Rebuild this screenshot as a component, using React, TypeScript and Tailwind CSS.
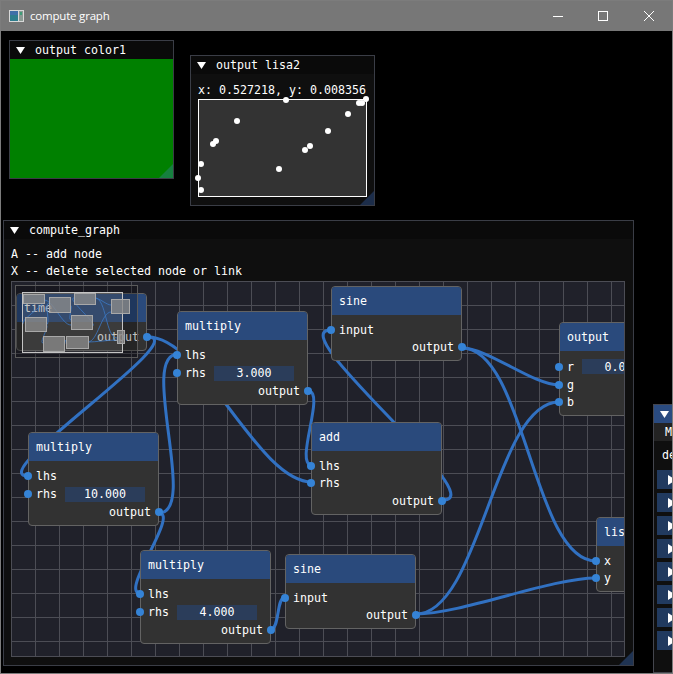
import React from "react";

type Pt = [number, number];

const mono = "font-['DejaVu_Sans_Mono',monospace] text-[11.63px] leading-none text-white whitespace-pre pt-[2px]";

// link curve the way the node editor draws them
const linkPath = (a: Pt, b: Pt) => {
  const off = 0.25 * Math.hypot(b[0] - a[0], b[1] - a[1]);
  return `M${a[0]} ${a[1]}C${a[0] + off} ${a[1]} ${b[0] - off} ${b[1]} ${b[0]} ${b[1]}`;
};

const links: [Pt, Pt][] = [
  [[148, 337], [312, 482]],
  [[148, 337], [28, 476]],
  [[159, 513], [178, 354]],
  [[159, 513], [140, 593]],
  [[308, 391], [312, 465]],
  [[443, 500], [331, 330]],
  [[462, 348], [559, 385]],
  [[462, 348], [596, 561]],
  [[416, 614], [559, 402]],
  [[416, 614], [596, 578]],
  [[271, 629], [285, 597]],
];

const miniNodes = [
  [23, 294, 21, 9],
  [49, 297, 21, 15],
  [74, 293, 21, 11],
  [111, 299, 18, 14],
  [25, 317, 21, 14],
  [71, 315, 21, 14],
  [43, 336, 21, 15],
  [66, 336, 22, 12],
  [117, 330, 7, 13],
];

const miniLinks: [Pt, Pt][] = [
  [[44, 300], [24, 323]],
  [[44, 300], [71, 325]],
  [[46, 325], [49, 303]],
  [[46, 325], [43, 343]],
  [[70, 305], [71, 320]],
  [[92, 326], [74, 298]],
  [[95, 298], [111, 305]],
  [[95, 298], [117, 338]],
  [[88, 342], [111, 312]],
  [[88, 342], [117, 340]],
  [[64, 345], [66, 340]],
];

const plotPoints: Pt[] = [
  [286, 100], [366, 99], [362, 103], [359, 103], [348, 114], [328, 131], [310, 146], [305, 150],
  [279, 169], [237, 121], [216, 141], [213, 144], [201, 164], [198, 178], [201, 190],
];

const TriDown = () => (
  <svg viewBox="0 0 9 7" className="w-[9px] h-[7px] shrink-0">
    <polygon points="0,0 9,0 4.5,7" fill="#fff" />
  </svg>
);

const WinTitle = ({ text }: { text: string }) => (
  <div className="h-[18px] bg-[#0a0a0a] flex items-center pl-[6px] gap-[10px]">
    <TriDown />
    <span className={mono}>{text}</span>
  </div>
);

const Corner = ({ className }: { className: string }) => (
  <div className={`absolute right-0 bottom-0 w-[14px] h-[14px] [clip-path:polygon(100%_0,100%_100%,0_100%)] ${className}`} />
);

interface Row {
  label: string;
  out?: boolean;
  value?: string;
}

const Node = ({ title, rows, className }: { title: string; rows: Row[]; className: string }) => (
  <div className={`absolute w-[131px] rounded-[4px] border border-[#636363] bg-[#323232] ${className}`}>
    <div className={`h-[28px] bg-[#2a4a7c] rounded-t-[3px] flex items-center pl-[7px] ${mono}`}>{title}</div>
    <div className="pt-[6px] pb-[4px]">
      {rows.map((r) => (
        <div
          key={r.label}
          className={`relative flex items-center gap-[8px] pl-[7px] pr-[7px] ${r.value ? "h-[19px]" : "h-[17.5px]"} ${r.out ? "justify-end" : ""}`}
        >
          <div
            className={`absolute w-[8px] h-[8px] rounded-full bg-[#3583d6] ${r.out ? "right-[-5px]" : "left-[-5px]"}`}
          />
          <span className={mono}>{r.label}</span>
          {r.value && (
            <div className={`w-[80px] h-[15px] shrink-0 bg-[#2b3d5a] flex items-center justify-center ${mono}`}>
              {r.value}
            </div>
          )}
        </div>
      ))}
    </div>
  </div>
);

const multiply = (value: string): Row[] => [
  { label: "lhs" },
  { label: "rhs", value },
  { label: "output", out: true },
];

const sine: Row[] = [{ label: "input" }, { label: "output", out: true }];

export default function App() {
  return (
    <div className="relative w-[673px] h-[674px] bg-black border border-[#7c7c7c] flex flex-col overflow-hidden">
      {/* title bar */}
      <div className="h-[30px] shrink-0 bg-[#777777] flex items-center pl-[8px] font-['Open_Sans',sans-serif] text-[11.5px] tracking-[-0.2px] text-white">
        <svg viewBox="0 0 15 12" className="w-[15px] h-[12px] mr-[6px]">
          <rect width="15" height="12" fill="#d8d8d8" />
          <rect x="1" y="1" width="8" height="10" fill="#2e7d8c" />
          <rect x="1" y="1" width="8" height="4" fill="#3f6fa8" />
          <rect x="10" y="1" width="4" height="10" fill="#8c9a94" />
          <rect x="11" y="2" width="2" height="3" fill="#3f9c78" />
        </svg>
        <span>compute graph</span>
        <div className="ml-auto flex items-center">
          <svg viewBox="0 0 10 10" className="w-[10px] h-[10px] mr-[35px]">
            <rect y="5" width="10" height="1" fill="#fff" />
          </svg>
          <svg viewBox="0 0 10 10" className="w-[10px] h-[10px] mr-[36px]">
            <rect x="0.5" y="0.5" width="9" height="9" fill="none" stroke="#fff" />
          </svg>
          <svg viewBox="0 0 10 10" className="w-[10px] h-[10px] mr-[18px]">
            <path d="M0 0L10 10M10 0L0 10" stroke="#fff" strokeWidth="1" />
          </svg>
        </div>
      </div>

      <div className="relative flex-1">
        {/* output color1 */}
        <div className="absolute left-[8px] top-[9px] w-[165px] h-[139px] border border-[#3a3d46] bg-[#0f0f0f] flex flex-col">
          <WinTitle text="output color1" />
          <div className="flex-1 bg-[#008000]" />
          <Corner className="bg-[#16803f]" />
        </div>

        {/* output lisa2 */}
        <div className="absolute left-[189px] top-[24px] w-[185px] h-[151px] border border-[#3a3d46] bg-[#0f0f0f]">
          <WinTitle text="output lisa2" />
          <div className={`h-[18px] mt-[7px] pl-[7px] flex items-center ${mono}`}>x: 0.527218, y: 0.008356</div>
          <svg viewBox="198 99 169 99" className="block ml-[7px] w-[169px] h-[99px] overflow-visible">
            <rect x="198.5" y="99.5" width="168" height="97" fill="#333333" stroke="#fff" />
            {plotPoints.map(([x, y]) => (
              <circle key={`${x}-${y}`} cx={x} cy={y} r="3" fill="#fff" />
            ))}
          </svg>
          <Corner className="bg-[#1c2d4a]" />
        </div>

        {/* compute_graph */}
        <div className="absolute left-[2px] top-[189px] w-[631px] h-[446px] border border-[#3a3d46] bg-[#0f0f0f]">
          <WinTitle text="compute_graph" />
          <div className="px-[7px] pt-[6px]">
            <div className={`h-[17px] flex items-center ${mono}`}>A -- add node</div>
            <div className={`h-[17px] flex items-center ${mono}`}>X -- delete selected node or link</div>
            <div className="relative mt-[2px] w-[614px] h-[376px] overflow-hidden border-r border-b border-[#4c4d55] bg-[#20212a] bg-[linear-gradient(#4c4d55_1px,transparent_1px),linear-gradient(90deg,#4c4d55_1px,transparent_1px)] bg-[size:24px_24px]">
              <svg viewBox="11 281 614 376" className="absolute left-0 top-0 w-[614px] h-[376px]">
                {links.map(([a, b]) => (
                  <path key={`${a}-${b}`} d={linkPath(a, b)} fill="none" stroke="#3171c2" strokeWidth="3" />
                ))}
              </svg>

              <Node title="time" rows={[{ label: "output", out: true }]} className="left-[5px] top-[12px]" />
              <Node title="multiply" rows={multiply("3.000")} className="left-[166px] top-[30px]" />
              <Node title="multiply" rows={multiply("10.000")} className="left-[17px] top-[151px]" />
              <Node title="multiply" rows={multiply("4.000")} className="left-[129px] top-[269px]" />
              <Node title="sine" rows={sine} className="left-[320px] top-[5px]" />
              <Node title="sine" rows={sine} className="left-[274px] top-[273px]" />
              <Node
                title="add"
                rows={[{ label: "lhs" }, { label: "rhs" }, { label: "output", out: true }]}
                className="left-[300px] top-[141px]"
              />
              <Node
                title="output"
                rows={[{ label: "r", value: "0.000" }, { label: "g" }, { label: "b" }]}
                className="left-[548px] top-[41px]"
              />
              <Node title="lisa" rows={[{ label: "x" }, { label: "y" }]} className="left-[585px] top-[236px]" />

              {/* minimap */}
              <svg viewBox="15 285 123 73" className="absolute left-[4px] top-[4px] w-[123px] h-[73px]">
                <rect x="15.5" y="285.5" width="122" height="72" fill="#000" fillOpacity="0.25" stroke="#5a5a5a" />
                <rect x="22.5" y="292.5" width="100" height="60" fill="#fff" fillOpacity="0.1" stroke="#c4c4c4" />
                {miniLinks.map(([a, b]) => (
                  <path key={`${a}-${b}`} d={linkPath(a, b)} fill="none" stroke="#3b78c4" strokeOpacity="0.8" />
                ))}
                {miniNodes.map(([x, y, w, h]) => (
                  <rect
                    key={`${x}-${y}`}
                    x={x + 0.5}
                    y={y + 0.5}
                    width={w}
                    height={h}
                    fill="#8a8a8a"
                    fillOpacity="0.8"
                    stroke="#a8a8a8"
                  />
                ))}
              </svg>
            </div>
          </div>
          <Corner className="bg-[#1f3352]" />
        </div>

        {/* panel cut off by the window edge */}
        <div className="absolute left-[652px] top-[373px] w-[60px] h-[269px] border border-[#44464e] bg-[#0f0f0f]">
          <div className="h-[18px] bg-[#2a4b80] flex items-center pl-[6px]">
            <TriDown />
          </div>
          <div className={`h-[18px] bg-[#232323] flex items-center pl-[11px] ${mono}`}>M</div>
          <div className={`h-[29px] flex items-center pl-[8px] pb-[2px] ${mono}`}>de</div>
          <div className="flex flex-col gap-[4px] pl-[3px]">
            {Array.from({ length: 8 }).map((_, i) => (
              <div key={i} className="h-[19px] bg-[#213a5f] flex items-center pl-[11px]">
                <svg viewBox="0 0 8 10" className="w-[8px] h-[10px]">
                  <polygon points="0,0 8,5 0,10" fill="#fff" />
                </svg>
              </div>
            ))}
          </div>
        </div>
      </div>
    </div>
  );
}
